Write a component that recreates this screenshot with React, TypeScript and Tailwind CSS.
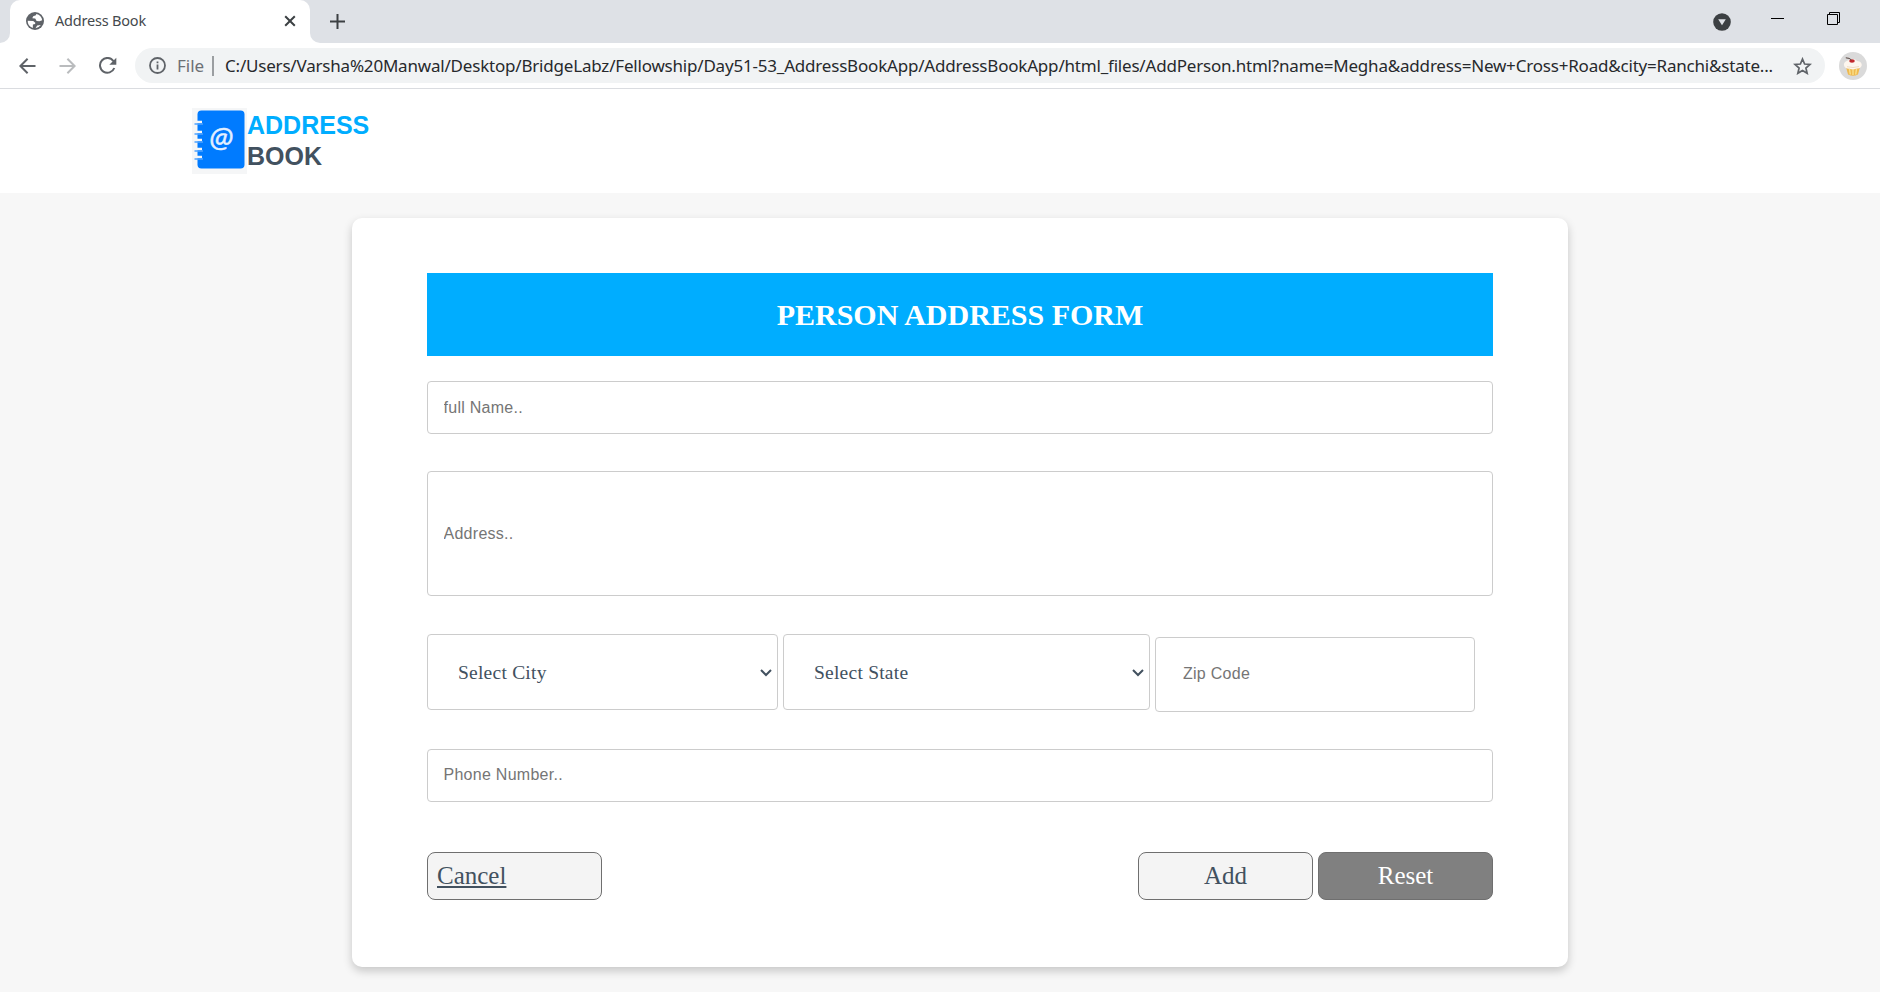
import { useState } from "react";

const field =
  "block rounded border border-[#ccc] bg-white font-['Liberation_Sans',Arial,sans-serif] text-base tracking-[0.27px] placeholder:text-[#757575] placeholder:opacity-100 focus:outline-none";
const button =
  "h-12 w-[175px] rounded-lg border border-[#6f6f6f] pb-[2px] font-['Liberation_Serif','Times_New_Roman',serif] text-[25px] leading-none";

function TabStrip() {
  return (
    <div className="flex h-[43px] bg-[#dee1e6]">
      <div className="w-[10px] bg-white">
        <div className="h-full w-full rounded-br-[10px] bg-[#dee1e6]" />
      </div>
      <div className="flex w-[300px] items-center rounded-t-[10px] bg-white pb-px pl-4 pr-[14px]">
        <svg className="shrink-0" width="18" height="18" viewBox="0 0 18 18">
          <circle cx="9" cy="9" r="9" fill="#5f6368" />
          <path d="M10.3 1.9 9.9 3.3 7.2 4.2 6.3 6.2 9.2 6.6 10.6 8.9 13.4 9.3 16.2 8.3A7.4 7.4 0 0 0 10.3 1.9Z" fill="#fff" />
          <path d="M1.7 8.7 7.2 8.9 9.3 10.8 9.1 12 6.9 12.6 6.8 15.9A7.3 7.3 0 0 1 1.7 8.7Z" fill="#fff" />
          <path d="M9.5 16.2 11.2 13.4 14.8 13A7.3 7.3 0 0 1 9.5 16.2Z" fill="#fff" />
        </svg>
        <span className="ml-[11px] flex-1 whitespace-nowrap font-['Noto_Sans',sans-serif] text-[14.5px] tracking-[-0.2px] text-[#45494d]">
          Address Book
        </span>
        <svg className="shrink-0" width="12" height="12" viewBox="0 0 12 12" stroke="#3c4043" strokeWidth="2">
          <path d="m1.2 1.2 9.6 9.6m0-9.6-9.6 9.6" />
        </svg>
      </div>
      <div className="w-[10px] bg-white">
        <div className="h-full w-full rounded-bl-[10px] bg-[#dee1e6]" />
      </div>
      <svg className="ml-[10px] mt-[14px]" width="15" height="15" viewBox="0 0 15 15" stroke="#3c4043" strokeWidth="2">
        <path d="M7.5 0v15M0 7.5h15" />
      </svg>
      <svg className="ml-auto mt-[13px]" width="18" height="18" viewBox="0 0 18 18">
        <circle cx="9" cy="9" r="8.8" fill="#3c4043" />
        <path d="M5.2 6.3h7.6L9 12.3Z" fill="#dee1e6" />
      </svg>
      <svg className="ml-10 mt-[18px]" width="13" height="1" viewBox="0 0 13 1">
        <path d="M0 0h13v1H0Z" fill="#000" />
      </svg>
      <svg className="ml-[43px] mr-[40px] mt-3" width="13" height="13" viewBox="0 0 13 13" fill="none" stroke="#000">
        <path d="M.5 2.5h10v10H.5ZM2.5 2.5v-2h10v10h-2" />
      </svg>
    </div>
  );
}

function Cupcake() {
  return (
    <svg width="28" height="28" viewBox="0 0 28 28">
      <circle cx="14" cy="14" r="14" fill="#dadada" />
      <path d="M7 15 9 22.500Q14 25 19 22.500L21 15Z" fill="#efb94f" />
      <path d="M10.500 17 11.300 22.500M14 17V23M17.500 17 16.700 22.500" stroke="#f9e08c" strokeWidth="1.4" fill="none" />
      <path d="M5 13.500C4.500 10.500 7 9 9.500 8.200C12 6.500 16 6.700 18 9C21.500 9 23.500 12 22.500 14C21.500 16.500 18.500 16.500 16.800 16.700C15 17.500 12.500 17.300 10.800 16.700C8.500 17 5.500 16.200 5 13.500Z" fill="#fdf6ee" />
      <path d="M8 14.700Q14 16.500 20 14.500" stroke="#f0dcc6" fill="none" />
      <ellipse cx="13" cy="9" rx="2.8" ry="1.8" fill="#c3282d" />
      <path d="M12.500 8Q10.500 5.800 6.800 5.800" stroke="#53403b" fill="none" />
    </svg>
  );
}

function Toolbar() {
  return (
    <div className="flex h-[46px] items-center border-b border-[#dadce0] bg-white pl-[19px] pr-[13px]">
      <svg className="shrink-0" width="17" height="16" viewBox="0 0 17 16" fill="none" stroke="#5f6368" strokeWidth="2">
        <path d="M16.5 8H1.8M8.6 .8 1.4 8l7.2 7.2" />
      </svg>
      <svg className="ml-[23px] shrink-0" width="17" height="16" viewBox="0 0 17 16" fill="none" stroke="#babcbe" strokeWidth="2">
        <path d="M.5 8h14.7M8.4 .8 15.6 8l-7.2 7.2" />
      </svg>
      <svg className="ml-[22px] shrink-0" width="19" height="18" viewBox="0 0 19 18" fill="none" stroke="#5f6368" strokeWidth="2">
        <path d="M15.5 4.2A7.4 7.4 0 1 0 16.3 11" />
        <path d="M18.3.8v7h-7Z" fill="#5f6368" stroke="none" />
      </svg>
      <div className="ml-[18px] flex h-[35px] w-[1690px] shrink-0 items-center rounded-full bg-[#f1f3f4] pl-[14px] pr-[13px] font-['Noto_Sans',sans-serif] text-[17px]">
        <svg className="shrink-0" width="17" height="17" viewBox="0 0 17 17" fill="none" stroke="#5f6368" strokeWidth="1.8">
          <circle cx="8.5" cy="8.5" r="7.5" />
          <path d="M8.5 7.5v5M8.5 4.4v1.9" />
        </svg>
        <span className="ml-[11px] w-[35px] shrink-0 whitespace-nowrap text-[#6c7074]">File</span>
        <span className="h-5 w-[2px] shrink-0 bg-[#9b9ea1]" />
        <span className="ml-[11px] min-w-0 flex-1 whitespace-nowrap tracking-[-0.197px] text-[#27292c]">
          C:/Users/Varsha%20Manwal/Desktop/BridgeLabz/Fellowship/Day51-53_AddressBookApp/AddressBookApp/html_files/AddPerson.html?name=Megha&amp;address=New+Cross+Road&amp;city=Ranchi&amp;state...
        </span>
        <svg className="shrink-0" width="19" height="18" viewBox="0 0 19 18" fill="none" stroke="#5f6368" strokeWidth="1.7">
          <path d="m9.5 2 2.1 5 5.4.45-4.1 3.55 1.25 5.3L9.5 13.5l-4.65 2.8L6.1 11 2 7.45 7.4 7Z" />
        </svg>
      </div>
      <div className="ml-auto">
        <Cupcake />
      </div>
    </div>
  );
}

function Logo() {
  return (
    <svg width="55" height="66" viewBox="0 0 55 66" className="bg-[#f5f6f7]">
      <rect x="5.5" y="2.5" width="47" height="58" rx="4" fill="#007bff" />
      <path d="M5 14h5M5 24h5M5 32h5M5 41h5M5 49h5" stroke="#f5f6f7" strokeWidth="2.4" />
      <path d="M2.5 16H11M2.5 26H11M2.5 34H11M2.5 43H11M2.5 51H11" stroke="#4da2ff" strokeWidth="1.6" />
      <text
        x="29"
        y="40"
        textAnchor="middle"
        fill="#e3f0ff"
        stroke="#e3f0ff"
        strokeWidth="0.5"
        fontSize="28"
        fontStyle="italic"
        className="font-['Open_Sans',sans-serif]"
      >
        @
      </text>
    </svg>
  );
}

function Select({ label, width }: { label: string; width: string }) {
  const [value, setValue] = useState(label);
  return (
    <div className={`relative h-[76px] ${width}`}>
      <select
        aria-label={label}
        value={value}
        onChange={(e) => setValue(e.target.value)}
        className="h-full w-full appearance-none rounded border border-[#ccc] bg-white pl-[30px] pt-[2px] font-['Liberation_Serif','Times_New_Roman',serif] text-[19.5px] tracking-[0.23px] text-[#42515f]"
      >
        <option>{label}</option>
      </select>
      <svg className="pointer-events-none absolute right-[6px] top-[35px]" width="12" height="8" viewBox="0 0 12 8" fill="none" stroke="#42515f" strokeWidth="2">
        <path d="m1 1 5 5 5-5" />
      </svg>
    </div>
  );
}

export default function App() {
  return (
    <div className="h-[1002px] w-[1880px] overflow-hidden bg-white">
      <TabStrip />
      <Toolbar />
      <header className="flex h-[104px] items-start bg-white pl-48 pt-[19px]">
        <Logo />
        <div className="pt-[2px] font-['Liberation_Sans',Arial,sans-serif] text-[25px] font-bold leading-[31px] text-[#42515f]">
          <div className="text-[#00adff]">ADDRESS</div>
          <div>BOOK</div>
        </div>
      </header>
      <main className="h-[799px] bg-[#f7f7f7] pl-[352px] pt-[25px]">
        <form className="h-[749px] w-[1216px] rounded-[10px] bg-white px-[75px] pt-[55px] shadow-[0_4px_10px_0_rgba(0,0,0,0.2)]">
          <h1 className="flex h-[83px] items-center justify-center bg-[#00adff] font-['Liberation_Serif','Times_New_Roman',serif] text-[30px] font-bold text-white">
            PERSON ADDRESS FORM
          </h1>
          <input className={`${field} mt-[25px] h-[53px] w-full px-[15.5px]`} placeholder="full Name.." />
          <input className={`${field} mt-[37px] h-[125px] w-full px-[15.5px]`} placeholder="Address.." />
          <div className="mt-[38px] flex gap-[5px]">
            <Select label="Select City" width="w-[351px]" />
            <Select label="Select State" width="w-[367px]" />
            <input className={`${field} mt-[3px] h-[75px] w-[320px] px-[27px] pb-[2px]`} placeholder="Zip Code" />
          </div>
          <input className={`${field} mt-[37px] h-[53px] w-full px-[15.5px] pb-[2px]`} placeholder="Phone Number.." />
          <div className="mt-[50px] flex gap-[5px]">
            <a className={`${button} mr-auto flex items-center bg-[#f4f4f4] pl-[9px] text-[#42515f] underline`}>Cancel</a>
            <button type="button" className={`${button} bg-[#f4f4f4] text-[#42515f]`}>Add</button>
            <button type="reset" className={`${button} bg-[#808080] text-white`}>Reset</button>
          </div>
        </form>
      </main>
    </div>
  );
}
